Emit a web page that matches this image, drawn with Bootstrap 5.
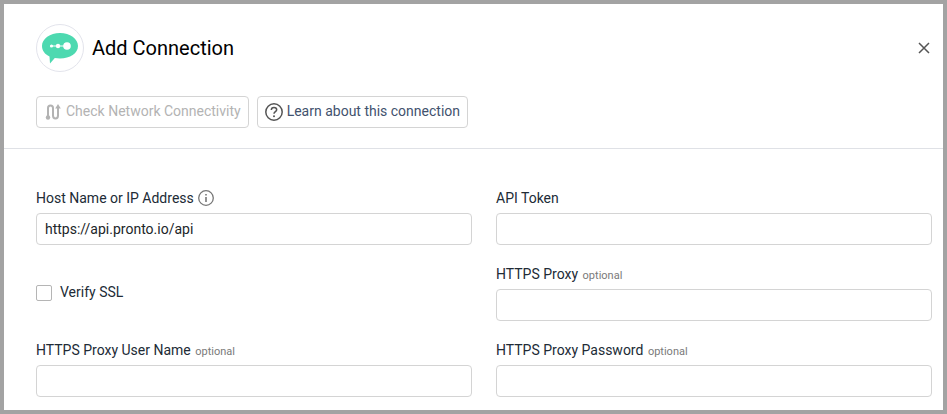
<!DOCTYPE html>
<html lang="en">
<head>
<meta charset="utf-8">
<title>Add Connection</title>
<link href="https://cdn.jsdelivr.net/npm/bootstrap@5.3.0/dist/css/bootstrap.min.css" rel="stylesheet">
<style>
html,body{height:100%;overflow:hidden}
body{font-family:Roboto,"Liberation Sans",sans-serif;font-size:14px;color:#212529;background:#fff}
.frame-box{height:414px;border:4px solid #a3a3a3;background:#fff;overflow:hidden}
.head-area{padding:20px 11px 20px 32px;border-bottom:1px solid #dfe1e6;height:145px}
.logo-ring{width:48px;height:48px;border:1px solid #e3e4ec;border-radius:50%}
.dlg-title{font-size:20px;font-weight:400;line-height:24px;color:#000;letter-spacing:0}
.close-x{width:12px;height:12px;margin-right:2px;border:0;background:none;padding:0;display:flex}
.action-row{margin-top:24px;gap:8px}
.act-btn{height:32px;padding:0 7px;font-size:14px;line-height:20px;border:1px solid #d4d4d4;border-radius:4px;background:#fff;color:#42526e;display:flex;align-items:center;gap:4px;white-space:nowrap}
.act-btn span{padding-bottom:2px}
.act-btn:disabled{color:#b3b3b3;border-color:#d4d4d4;opacity:1}
.form-area{padding:39px 11px 0 32px}
.form-row{--bs-gutter-x:24px;--bs-gutter-y:19px}
.fld-label{display:flex;align-items:baseline;gap:4px;height:20px;font-size:14px;line-height:20px;margin-bottom:5px;color:#212b36}
.fld-label svg{align-self:center}
.opt-note{font-size:11px;line-height:1;color:#7a7a7a;margin-left:.5px}
.fld-input{height:32px;padding:0 8px;font-size:14px;border:1px solid #d4d4d4;border-radius:4px;color:#212529}
.check-cell{display:flex;align-items:center;height:57px;gap:8px}
.form-check-input[type=checkbox].check-box{width:16px;height:16px;margin:0;border:1px solid #b5b5b5;border-radius:2px;flex:none}
.check-text{font-size:14px;color:#212b36;margin:0}
</style>
</head>
<body>
<div class="frame-box">
  <div class="head-area">
    <div class="d-flex align-items-center justify-content-between">
      <div class="d-flex align-items-center gap-2">
        <div class="logo-ring d-flex align-items-center justify-content-center">
          <svg width="38" height="32" viewBox="0 0 38 32" aria-hidden="true">
            <path d="M19 1C29 1 37 6.700 37 14C37 21.300 29 26.500 19 26.500C17 26.500 15.500 26.300 13.800 26L9 31.500L8.500 24.500C3.800 22.300 1 18.500 1 14C1 6.700 9 1 19 1Z" fill="#4dd9b0"/>
            <circle cx="26" cy="14" r="3.800" fill="#fff"/>
            <circle cx="17" cy="14" r="2.200" fill="#fff"/>
            <circle cx="10.500" cy="14" r="1.600" fill="#fff"/>
            <path d="M10 13.500H24V14.500H10Z" fill="#fff"/>
          </svg>
        </div>
        <h1 class="dlg-title m-0">Add Connection</h1>
      </div>
      <button type="button" class="close-x" aria-label="Close">
        <svg width="12" height="12" viewBox="0 0 12 12"><path d="M1 1L11 11M11 1L1 11" stroke="#555" stroke-width="1.500" fill="none"/></svg>
      </button>
    </div>
    <div class="d-flex action-row">
      <button type="button" class="act-btn" disabled>
        <svg width="18" height="18" viewBox="0 0 18 18" fill="none" stroke="#b3b3b3" stroke-width="2" aria-hidden="true">
          <path d="M4 13V5C4 1.500 9 1.500 9 5V12.500C9 16.500 14 16.500 14 12.500V4"/>
          <path d="M11.200 5.500L14 1L16.800 5.500Z" fill="#b3b3b3" stroke="none"/>
          <circle cx="4" cy="14.500" r="2.200" fill="#b3b3b3" stroke="none"/>
        </svg>
        <span>Check Network Connectivity</span>
      </button>
      <button type="button" class="act-btn">
        <svg width="18" height="18" viewBox="0 0 18 18" fill="none" aria-hidden="true">
          <circle cx="9" cy="9" r="8.200" stroke="#555" stroke-width="1.500"/>
          <path d="M6.300 7C6.300 5.400 7.500 4.400 9 4.400C10.500 4.400 11.700 5.400 11.700 6.800C11.700 8.600 9 8.700 9 10.800" stroke="#555" stroke-width="1.500"/>
          <circle cx="9" cy="13.200" r="1" fill="#555"/>
        </svg>
        <span>Learn about this connection</span>
      </button>
    </div>
  </div>
  <div class="form-area">
    <form class="row form-row">
      <div class="col-6">
        <label class="fld-label" for="f1">Host Name or IP Address
          <svg width="16" height="16" viewBox="0 0 16 16" fill="none" aria-hidden="true">
            <circle cx="8" cy="8" r="7.300" stroke="#777" stroke-width="1.300"/>
            <path d="M8 7V12" stroke="#777" stroke-width="1.600"/>
            <path d="M8 4V5.500" stroke="#777" stroke-width="1.600"/>
          </svg>
        </label>
        <input id="f1" class="form-control fld-input" type="text" value="https://api.pronto.io/api">
      </div>
      <div class="col-6">
        <label class="fld-label" for="f2">API Token</label>
        <input id="f2" class="form-control fld-input" type="text">
      </div>
      <div class="col-6">
        <div class="check-cell">
          <input id="f3" class="form-check-input check-box" type="checkbox">
          <label class="check-text" for="f3">Verify SSL</label>
        </div>
      </div>
      <div class="col-6">
        <label class="fld-label" for="f4">HTTPS Proxy <span class="opt-note">optional</span></label>
        <input id="f4" class="form-control fld-input" type="text">
      </div>
      <div class="col-6">
        <label class="fld-label" for="f5">HTTPS Proxy User Name <span class="opt-note">optional</span></label>
        <input id="f5" class="form-control fld-input" type="text">
      </div>
      <div class="col-6">
        <label class="fld-label" for="f6">HTTPS Proxy Password <span class="opt-note">optional</span></label>
        <input id="f6" class="form-control fld-input" type="text">
      </div>
    </form>
  </div>
</div>
<script src="https://cdn.jsdelivr.net/npm/bootstrap@5.3.0/dist/js/bootstrap.bundle.min.js"></script>
</body>
</html>
